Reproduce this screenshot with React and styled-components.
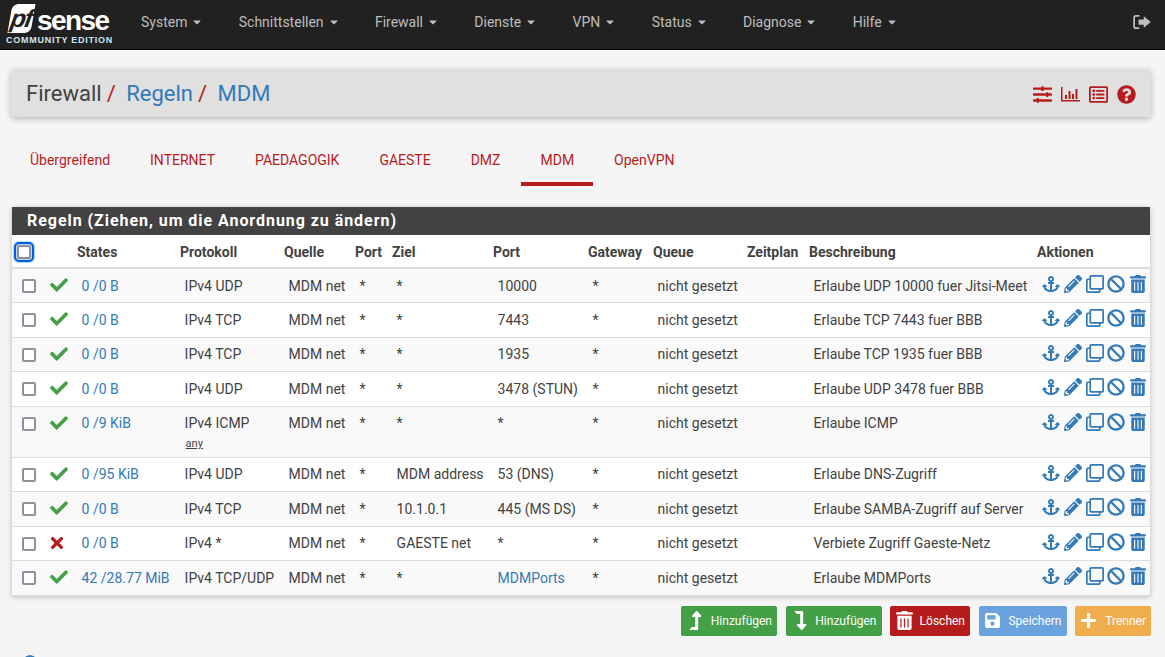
import React from 'react';
import styled, { createGlobalStyle } from 'styled-components';
import {
  FaAnchor, FaPencilAlt, FaBan, FaTrashAlt, FaCheck, FaTimes, FaSave, FaPlus,
  FaLevelUpAlt, FaLevelDownAlt, FaSlidersH, FaQuestionCircle, FaInfoCircle,
  FaRegClone, FaRegListAlt, FaCaretDown,
} from 'react-icons/fa';

const GlobalStyle = createGlobalStyle`
  html, body {
    margin: 0;
    height: 100%;
    overflow: hidden;
    background: #f5f5f5;
    font-family: Roboto, "Liberation Sans", sans-serif;
    font-size: 14px;
    color: #212121;
  }
`;

const Navbar = styled.nav`
  padding-bottom: 6px;
  height: 43px;
  background: #212121;
  border-bottom: 1px solid #000;
  display: flex;
  align-items: center;
`;

const Logo = styled.div`
  width: 141px;
  height: 49px;
  flex-shrink: 0;
  align-self: flex-start;
  padding: 4px 0 0 6px;
  box-sizing: border-box;
  color: #fff;
`;

const LogoTop = styled.div`
  display: flex;
  align-items: flex-end;
  height: 29px;
  padding-left: 4px;
`;

const LogoPf = styled.span`
  background: #fff;
  color: #212121;
  font: italic 700 25px/28px "Liberation Sans", sans-serif;
  height: 29px;
  width: 23px;
  padding-left: 1px;
  box-sizing: border-box;
  transform: skewX(-10deg);
  border-radius: 6px 0 6px 0;
  letter-spacing: -1.5px;
`;

const LogoSense = styled.span`
  font: 700 28px/24px "Liberation Sans", sans-serif;
  letter-spacing: -1.6px;
  margin-left: 4px;
  margin-bottom: 0;
`;

const LogoEdition = styled.div`
  font: 700 9px/10px "Liberation Sans", sans-serif;
  letter-spacing: 0.75px;
  color: #cfe6f5;
  margin-top: 2px;
  white-space: nowrap;
`;

const NavItem = styled.a`
  display: flex;
  align-items: center;
  gap: 4px;
  margin-right: 35.3px;
  color: #bdbdbd;
  font-size: 14px;
  white-space: nowrap;
`;

const LogoutIcon = styled.svg`
  width: 18px;
  height: 14px;
  margin-left: auto;
  margin-right: 14px;
  fill: #bdbdbd;
`;

const Crumbs = styled.div`
  margin: 19px 14px 0 11px;
  height: 48px;
  background: #e0e0e0;
  border-radius: 4px;
  box-shadow: 0 2px 6px rgba(0, 0, 0, 0.25);
  display: flex;
  align-items: center;
  padding: 0 15px;
`;

const CrumbText = styled.span`
  font-size: 22px;
  color: ${(p) => (p.$link ? '#337ab7' : '#424242')};
  margin-right: 5px;
`;

const CrumbSlash = styled.span`
  font-size: 22px;
  color: #b71c1c;
  margin-right: 10.5px;
`;

const CrumbIcons = styled.div`
  margin-left: auto;
  margin-top: 2px;
  display: flex;
  align-items: center;
  gap: 9px;
  color: #b71c1c;
  font-size: 19px;
  svg { display: block; }
`;

const Tabs = styled.ul`
  list-style: none;
  display: flex;
  margin: 20px 0 0 10px;
  padding: 0;
  height: 49px;
`;

const Tab = styled.li`
  margin: 0 1px;
  padding: 0 19px;
  height: 49px;
  line-height: 46px;
  box-sizing: border-box;
  color: #b71c1c;
  font-size: 14px;
  border-bottom: 4px solid ${(p) => (p.$active ? '#b71c1c' : 'transparent')};
`;

const Panel = styled.section`
  margin: 21px 15px 0 12px;
  background: #fff;
  box-shadow: 0 1px 5px rgba(0, 0, 0, 0.25);
`;

const PanelHeading = styled.h2`
  margin: 0;
  height: 28px;
  background: #424242;
  color: #fff;
  font-size: 16px;
  font-weight: 700;
  line-height: 28px;
  letter-spacing: 0.95px;
  padding-left: 15px;
`;

const Table = styled.table`
  width: 1138px;
  table-layout: fixed;
  border-collapse: collapse;
`;

const Th = styled.th`
  height: 33px;
  padding: 2px 0 0 5px;
  text-align: left;
  font-size: 14px;
  font-weight: 700;
  color: #424242;
  white-space: nowrap;
  border-bottom: 2px solid #ddd;
  box-sizing: border-box;
`;

const Row = styled.tr`
  background: ${(p) => (p.$odd ? '#f9f9f9' : '#fff')};
  border-bottom: 1px solid #ddd;
  height: ${(p) => (p.$tall ? 51 : 34.5)}px;
`;

const Td = styled.td`
  padding: 7.5px 0 0 9.6px;
  vertical-align: top;
  font-size: 14px;
  line-height: 18px;
  color: #424242;
  white-space: nowrap;
  box-sizing: border-box;
`;

const CheckCell = styled(Td)`
  padding: 10px 0 0 10px;
`;

const StatusCell = styled(Td)`
  padding: 7px 0 0 4px;
`;

const BlockedIcon = styled(FaTimes)`
  margin-left: -2px;
`;

const ActionCell = styled(Td)`
  padding: 5px 0 0 10px;
`;

const Box = styled.input`
  appearance: none;
  display: block;
  margin: 0;
  width: 14px;
  height: 14px;
  background: #fff;
  border: 2px solid #8f8f9d;
  border-radius: 2px;
  box-sizing: border-box;
`;

const HeadBox = styled(Box)`
  outline: 2px solid #0060df;
  outline-offset: 1px;
  box-shadow: 0 0 0 4px rgba(0, 96, 223, 0.25);
`;

const Link = styled.a`
  color: #337ab7;
`;

const Sub = styled.div`
  font-size: 11px;
  line-height: 14px;
  margin: 5px 0 0 1px;
  text-decoration: underline;
`;

const Actions = styled.div`
  display: flex;
  align-items: center;
  gap: 3.8px;
  color: #337ab7;
  font-size: 18px;
  height: 20px;
  svg { display: block; }
`;

const Footer = styled.div`
  display: flex;
  justify-content: flex-end;
  gap: 8.5px;
  margin: 10px 14px 0 0;
`;

const Btn = styled.button`
  height: 30px;
  width: ${(p) => p.$w}px;
  padding: 0 4px;
  border: 1px solid ${(p) => p.$bg};
  border-radius: 2px;
  background: ${(p) => p.$bg};
  color: #fff;
  font: 12px Roboto, sans-serif;
  display: flex;
  align-items: center;
  justify-content: space-between;
  box-sizing: border-box;
  svg { font-size: ${(p) => p.$icon || 17}px; flex-shrink: 0; }
`;

const InfoMark = styled.div`
  margin: 19px 0 0 22px;
  color: #337ab7;
  font-size: 16px;
`;

const menu = ['System', 'Schnittstellen', 'Firewall', 'Dienste', 'VPN', 'Status', 'Diagnose', 'Hilfe'];
const tabs = ['Übergreifend', 'INTERNET', 'PAEDAGOGIK', 'GAESTE', 'DMZ', 'MDM', 'OpenVPN'];
const widths = [34, 26, 103, 104, 71, 37, 101, 95, 65, 94, 62, 228, 118];
const headers = ['', '', 'States', 'Protokoll', 'Quelle', 'Port', 'Ziel', 'Port', 'Gateway', 'Queue', 'Zeitplan', 'Beschreibung', 'Aktionen'];

const rules = [
  { states: '0 /0 B', proto: 'IPv4 UDP', dest: '*', port: '10000', desc: 'Erlaube UDP 10000 fuer Jitsi-Meet' },
  { states: '0 /0 B', proto: 'IPv4 TCP', dest: '*', port: '7443', desc: 'Erlaube TCP 7443 fuer BBB' },
  { states: '0 /0 B', proto: 'IPv4 TCP', dest: '*', port: '1935', desc: 'Erlaube TCP 1935 fuer BBB' },
  { states: '0 /0 B', proto: 'IPv4 UDP', dest: '*', port: '3478 (STUN)', desc: 'Erlaube UDP 3478 fuer BBB' },
  { states: '0 /9 KiB', proto: 'IPv4 ICMP', sub: 'any', dest: '*', port: '*', desc: 'Erlaube ICMP' },
  { states: '0 /95 KiB', proto: 'IPv4 UDP', dest: 'MDM address', port: '53 (DNS)', desc: 'Erlaube DNS-Zugriff' },
  { states: '0 /0 B', proto: 'IPv4 TCP', dest: '10.1.0.1', port: '445 (MS DS)', desc: 'Erlaube SAMBA-Zugriff auf Server' },
  { states: '0 /0 B', proto: 'IPv4 *', dest: 'GAESTE net', port: '*', desc: 'Verbiete Zugriff Gaeste-Netz', blocked: true },
  { states: '42 /28.77 MiB', proto: 'IPv4 TCP/UDP', dest: '*', port: 'MDMPorts', portLink: true, desc: 'Erlaube MDMPorts' },
];

function ChartIcon() {
  return (
    <svg width="19" height="16" viewBox="0 0 19 16" fill="currentColor">
      <path d="M0 1h1.500v13H19v1.500H0zM4 9h2v4H4zM7.500 5h2v8h-2zM11 8h2v5h-2zM14.500 3h2v10h-2z" />
    </svg>
  );
}

export default function App() {
  return (
    <>
      <GlobalStyle />
      <Navbar>
        <Logo>
          <LogoTop>
            <LogoPf>pf</LogoPf>
            <LogoSense>sense</LogoSense>
          </LogoTop>
          <LogoEdition>COMMUNITY EDITION</LogoEdition>
        </Logo>
        {menu.map((m) => (
          <NavItem key={m}>
            {m} <FaCaretDown size={12} />
          </NavItem>
        ))}
        <LogoutIcon viewBox="0 0 20 16">
          <path d="M7 0H3a3 3 0 0 0-3 3v10a3 3 0 0 0 3 3h4v-2H3a1 1 0 0 1-1-1V3a1 1 0 0 1 1-1h4zM12 1.500v3.500H6v6h6v3.500L20 8z" />
        </LogoutIcon>
      </Navbar>

      <Crumbs>
        <CrumbText>Firewall</CrumbText>
        <CrumbSlash>/</CrumbSlash>
        <CrumbText $link>Regeln</CrumbText>
        <CrumbSlash>/</CrumbSlash>
        <CrumbText $link>MDM</CrumbText>
        <CrumbIcons>
          <FaSlidersH />
          <ChartIcon />
          <FaRegListAlt />
          <FaQuestionCircle />
        </CrumbIcons>
      </Crumbs>

      <Tabs>
        {tabs.map((t) => (
          <Tab key={t} $active={t === 'MDM'}>{t}</Tab>
        ))}
      </Tabs>

      <Panel>
        <PanelHeading>Regeln (Ziehen, um die Anordnung zu ändern)</PanelHeading>
        <Table>
          <colgroup>
            {widths.map((w, i) => <col key={i} width={w} />)}
          </colgroup>
          <thead>
            <tr>
              {headers.map((h, i) => (
                <Th key={i}>{i === 0 ? <HeadBox type="checkbox" /> : h}</Th>
              ))}
            </tr>
          </thead>
          <tbody>
            {rules.map((r, i) => (
              <Row key={i} $odd={i % 2 === 0} $tall={!!r.sub}>
                <CheckCell><Box type="checkbox" /></CheckCell>
                <StatusCell>
                  {r.blocked
                    ? <BlockedIcon size={18} color="#b71c1c" />
                    : <FaCheck size={18} color="#43a047" />}
                </StatusCell>
                <Td><Link>{r.states}</Link></Td>
                <Td>
                  {r.proto}
                  {r.sub && <Sub>{r.sub}</Sub>}
                </Td>
                <Td>MDM net</Td>
                <Td>*</Td>
                <Td>{r.dest}</Td>
                <Td>{r.portLink ? <Link>{r.port}</Link> : r.port}</Td>
                <Td>*</Td>
                <Td>nicht gesetzt</Td>
                <Td />
                <Td>{r.desc}</Td>
                <ActionCell>
                  <Actions>
                    <FaAnchor />
                    <FaPencilAlt />
                    <FaRegClone />
                    <FaBan />
                    <FaTrashAlt />
                  </Actions>
                </ActionCell>
              </Row>
            ))}
          </tbody>
        </Table>
      </Panel>

      <Footer>
        <Btn $w={96} $bg="#43a047" $icon={19}><FaLevelUpAlt />Hinzufügen</Btn>
        <Btn $w={96} $bg="#43a047" $icon={19}><FaLevelDownAlt />Hinzufügen</Btn>
        <Btn $w={80} $bg="#b71c1c" $icon={19}><FaTrashAlt />Löschen</Btn>
        <Btn $w={88} $bg="#69a2dc"><FaSave />Speichern</Btn>
        <Btn $w={76} $bg="#f0ad4e"><FaPlus />Trenner</Btn>
      </Footer>
      <InfoMark><FaInfoCircle /></InfoMark>
    </>
  );
}
